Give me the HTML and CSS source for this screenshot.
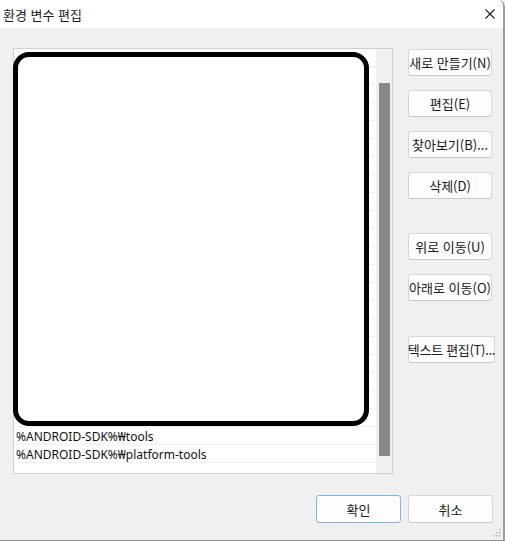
FILE: index.html
```html
<!DOCTYPE html>
<html lang="ko">
<head>
<meta charset="utf-8">
<title>환경 변수 편집</title>
<link rel="stylesheet" href="styles.css">
</head>
<body>
<div class="window">
  <div class="titlebar">
    <span class="title">환경 변수 편집</span>
    <span class="close" aria-label="닫기">
      <svg width="10" height="10" viewBox="0 0 10 10"><path d="M0.5 0.5 L9.5 9.5 M9.5 0.5 L0.5 9.5" stroke="#1b1b1b" stroke-width="1.1" fill="none"/></svg>
    </span>
  </div>
  <div class="content">
    <div class="main">
      <div class="list">
        <div class="rows">
          <div class="row"></div><div class="row"></div><div class="row"></div>
          <div class="row"></div><div class="row"></div><div class="row"></div>
          <div class="row"></div><div class="row"></div><div class="row"></div>
          <div class="row"></div><div class="row"></div><div class="row"></div>
          <div class="row"></div><div class="row"></div><div class="row"></div>
          <div class="row"></div><div class="row"></div><div class="row"></div>
          <div class="row"></div><div class="row"></div><div class="row"></div>
          <div class="row">%ANDROID-SDK%₩tools</div>
          <div class="row">%ANDROID-SDK%₩platform-tools</div>
        </div>
        <div class="scrollbar"><div class="thumb"></div></div>
        <div class="redact"></div>
      </div>
      <div class="side">
        <button class="btn">새로 만들기(N)</button>
        <button class="btn">편집(E)</button>
        <button class="btn">찾아보기(B)...</button>
        <button class="btn">삭제(D)</button>
        <button class="btn group">위로 이동(U)</button>
        <button class="btn">아래로 이동(O)</button>
        <button class="btn group wide">텍스트 편집(T)...</button>
      </div>
    </div>
    <div class="footer">
      <button class="btn default">확인</button>
      <button class="btn">취소</button>
    </div>
  </div>
  <svg class="grip" width="8" height="8" viewBox="0 0 8 8">
    <rect x="6" y="0" width="1.5" height="1.5" fill="#b5b5b5"/>
    <rect x="3" y="3" width="1.5" height="1.5" fill="#b5b5b5"/>
    <rect x="6" y="3" width="1.5" height="1.5" fill="#b5b5b5"/>
    <rect x="0" y="6" width="1.5" height="1.5" fill="#b5b5b5"/>
    <rect x="3" y="6" width="1.5" height="1.5" fill="#b5b5b5"/>
    <rect x="6" y="6" width="1.5" height="1.5" fill="#b5b5b5"/>
  </svg>
</div>
</body>
</html>
```
FILE: styles.css
```css
* { box-sizing: border-box; }
html, body {
  margin: 0;
  padding: 0;
  background: #f0f0f0;
}
body {
  font-family: "Noto Sans", "Noto Sans CJK KR", sans-serif;
  font-size: 12px;
  color: #000;
}
.window {
  position: relative;
  width: 505px;
  height: 541px;
  background: #f0f0f0;
  border-right: 2px solid #9c9c9c;
  border-bottom: 1px solid #8c8c8c;
  border-top-right-radius: 7px;
  overflow: hidden;
  display: flex;
  flex-direction: column;
}
.titlebar {
  height: 28px;
  background: #fff;
  display: flex;
  align-items: center;
  justify-content: space-between;
  padding: 0 8px 0 3px;
  flex: none;
}
.title {
  font-family: "Noto Sans CJK KR", sans-serif;
  font-size: 13px;
  color: #1a1a1a;
  line-height: 1;
}
.close {
  display: flex;
  width: 10px;
  height: 10px;
}
.content {
  flex: 1;
  display: flex;
  flex-direction: column;
  padding: 20px 0 0 13px;
}
.main {
  display: flex;
  gap: 15px;
}
.list {
  position: relative;
  width: 380px;
  height: 426px;
  border: 1px solid #cfcfcf;
  background: #fff;
  display: flex;
}
.rows {
  flex: 1;
  display: flex;
  flex-direction: column;
}
.row {
  height: 18px;
  border-bottom: 1px solid #f1f1f1;
  padding: 1px 0 0 2px;
  line-height: 17px;
  font-size: 12px;
  white-space: nowrap;
  color: #111;
}
.scrollbar {
  width: 16px;
  background: #f0f0f0;
  padding: 34px 2px 0 3px;
}
.thumb {
  width: 11px;
  height: 373px;
  background: #898989;
}
.redact {
  position: absolute;
  left: -1px;
  top: 3px;
  width: 356px;
  height: 374px;
  border: 5px solid #000;
  border-radius: 16px;
  background: #fff;
}
.side {
  display: flex;
  flex-direction: column;
  gap: 14px;
  padding-top: 1px;
}
.btn {
  font-family: "Noto Sans CJK KR", "Noto Sans", sans-serif;
  font-size: 13px;
  color: #1a1a1a;
  height: 27px;
  width: 84px;
  padding: 0;
  background: #fdfdfd;
  border: 1px solid #d6d6d6;
  border-bottom-color: #c8c8c8;
  border-radius: 3px;
  white-space: nowrap;
  display: flex;
  align-items: center;
  justify-content: center;
}
.btn.group { margin-top: 20px; }
.btn.wide { width: 87px; margin-top: 21px; letter-spacing: -0.3px; }
.footer {
  display: flex;
  justify-content: flex-end;
  gap: 7px;
  padding: 21px 10px 0 0;
}
.footer .btn {
  width: 85px;
  height: 28px;
}
.btn.default {
  border: 1px solid #7fb6e6;
}
.grip {
  position: absolute;
  right: 2px;
  bottom: 3px;
}
```
